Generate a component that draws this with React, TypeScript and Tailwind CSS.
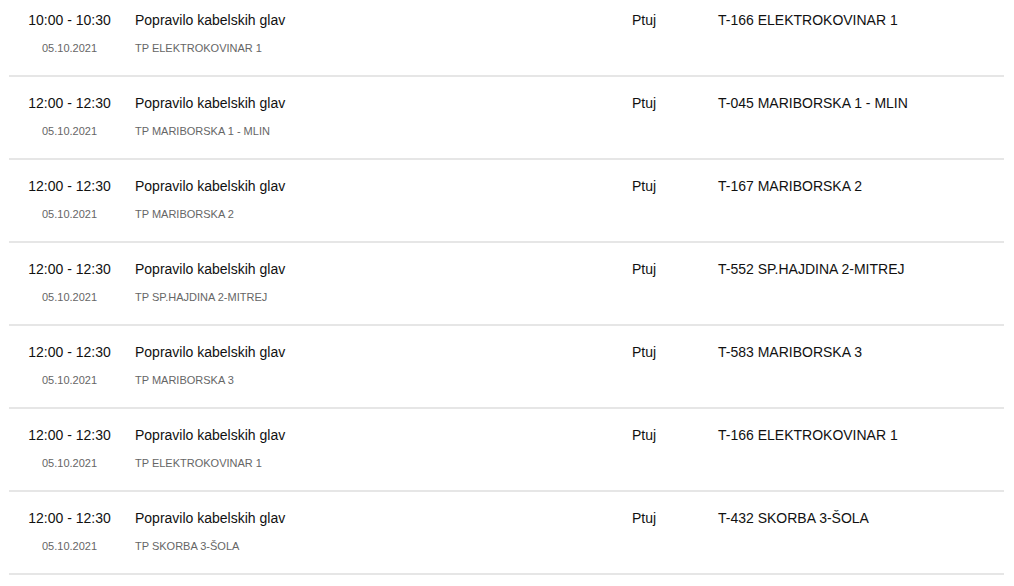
import React from "react";

const rows = [
  { time: "10:00 - 10:30", sub: "TP ELEKTROKOVINAR 1", code: "T-166 ELEKTROKOVINAR 1" },
  { time: "12:00 - 12:30", sub: "TP MARIBORSKA 1 - MLIN", code: "T-045 MARIBORSKA 1 - MLIN" },
  { time: "12:00 - 12:30", sub: "TP MARIBORSKA 2", code: "T-167 MARIBORSKA 2" },
  { time: "12:00 - 12:30", sub: "TP SP.HAJDINA 2-MITREJ", code: "T-552 SP.HAJDINA 2-MITREJ" },
  { time: "12:00 - 12:30", sub: "TP MARIBORSKA 3", code: "T-583 MARIBORSKA 3" },
  { time: "12:00 - 12:30", sub: "TP ELEKTROKOVINAR 1", code: "T-166 ELEKTROKOVINAR 1" },
  { time: "12:00 - 12:30", sub: "TP SKORBA 3-ŠOLA", code: "T-432 SKORBA 3-ŠOLA" },
];

export default function App() {
  return (
    <div
      className="w-[1014px] h-[586px] overflow-hidden bg-white pl-[9px] pr-[10px]"
      style={{ fontFamily: '"Liberation Sans", Arial, sans-serif' }}
    >
      {rows.map((r, i) => (
        <div
          key={i}
          className={`flex border-b-2 border-[#e6e6e6] pb-[20px] ${i === 0 ? "pt-[12px]" : "pt-[18px]"}`}
        >
          <div className="w-[121px] shrink-0 flex flex-col items-center">
            <div className="h-[16px] leading-[16px] text-[14px] text-[#111]">{r.time}</div>
            <div className="mt-[13px] h-[14px] leading-[14px] text-[11px] text-[#666]">05.10.2021</div>
          </div>
          <div className="ml-[5px] w-[497px] shrink-0 flex flex-col">
            <div className="h-[16px] leading-[16px] text-[14px] text-[#111]">Popravilo kabelskih glav</div>
            <div className="mt-[13px] h-[14px] leading-[14px] text-[11px] text-[#666]">{r.sub}</div>
          </div>
          <div className="w-[86px] shrink-0 h-[16px] leading-[16px] text-[14px] text-[#111]">Ptuj</div>
          <div className="h-[16px] leading-[16px] text-[14px] text-[#111]">{r.code}</div>
        </div>
      ))}
    </div>
  );
}
